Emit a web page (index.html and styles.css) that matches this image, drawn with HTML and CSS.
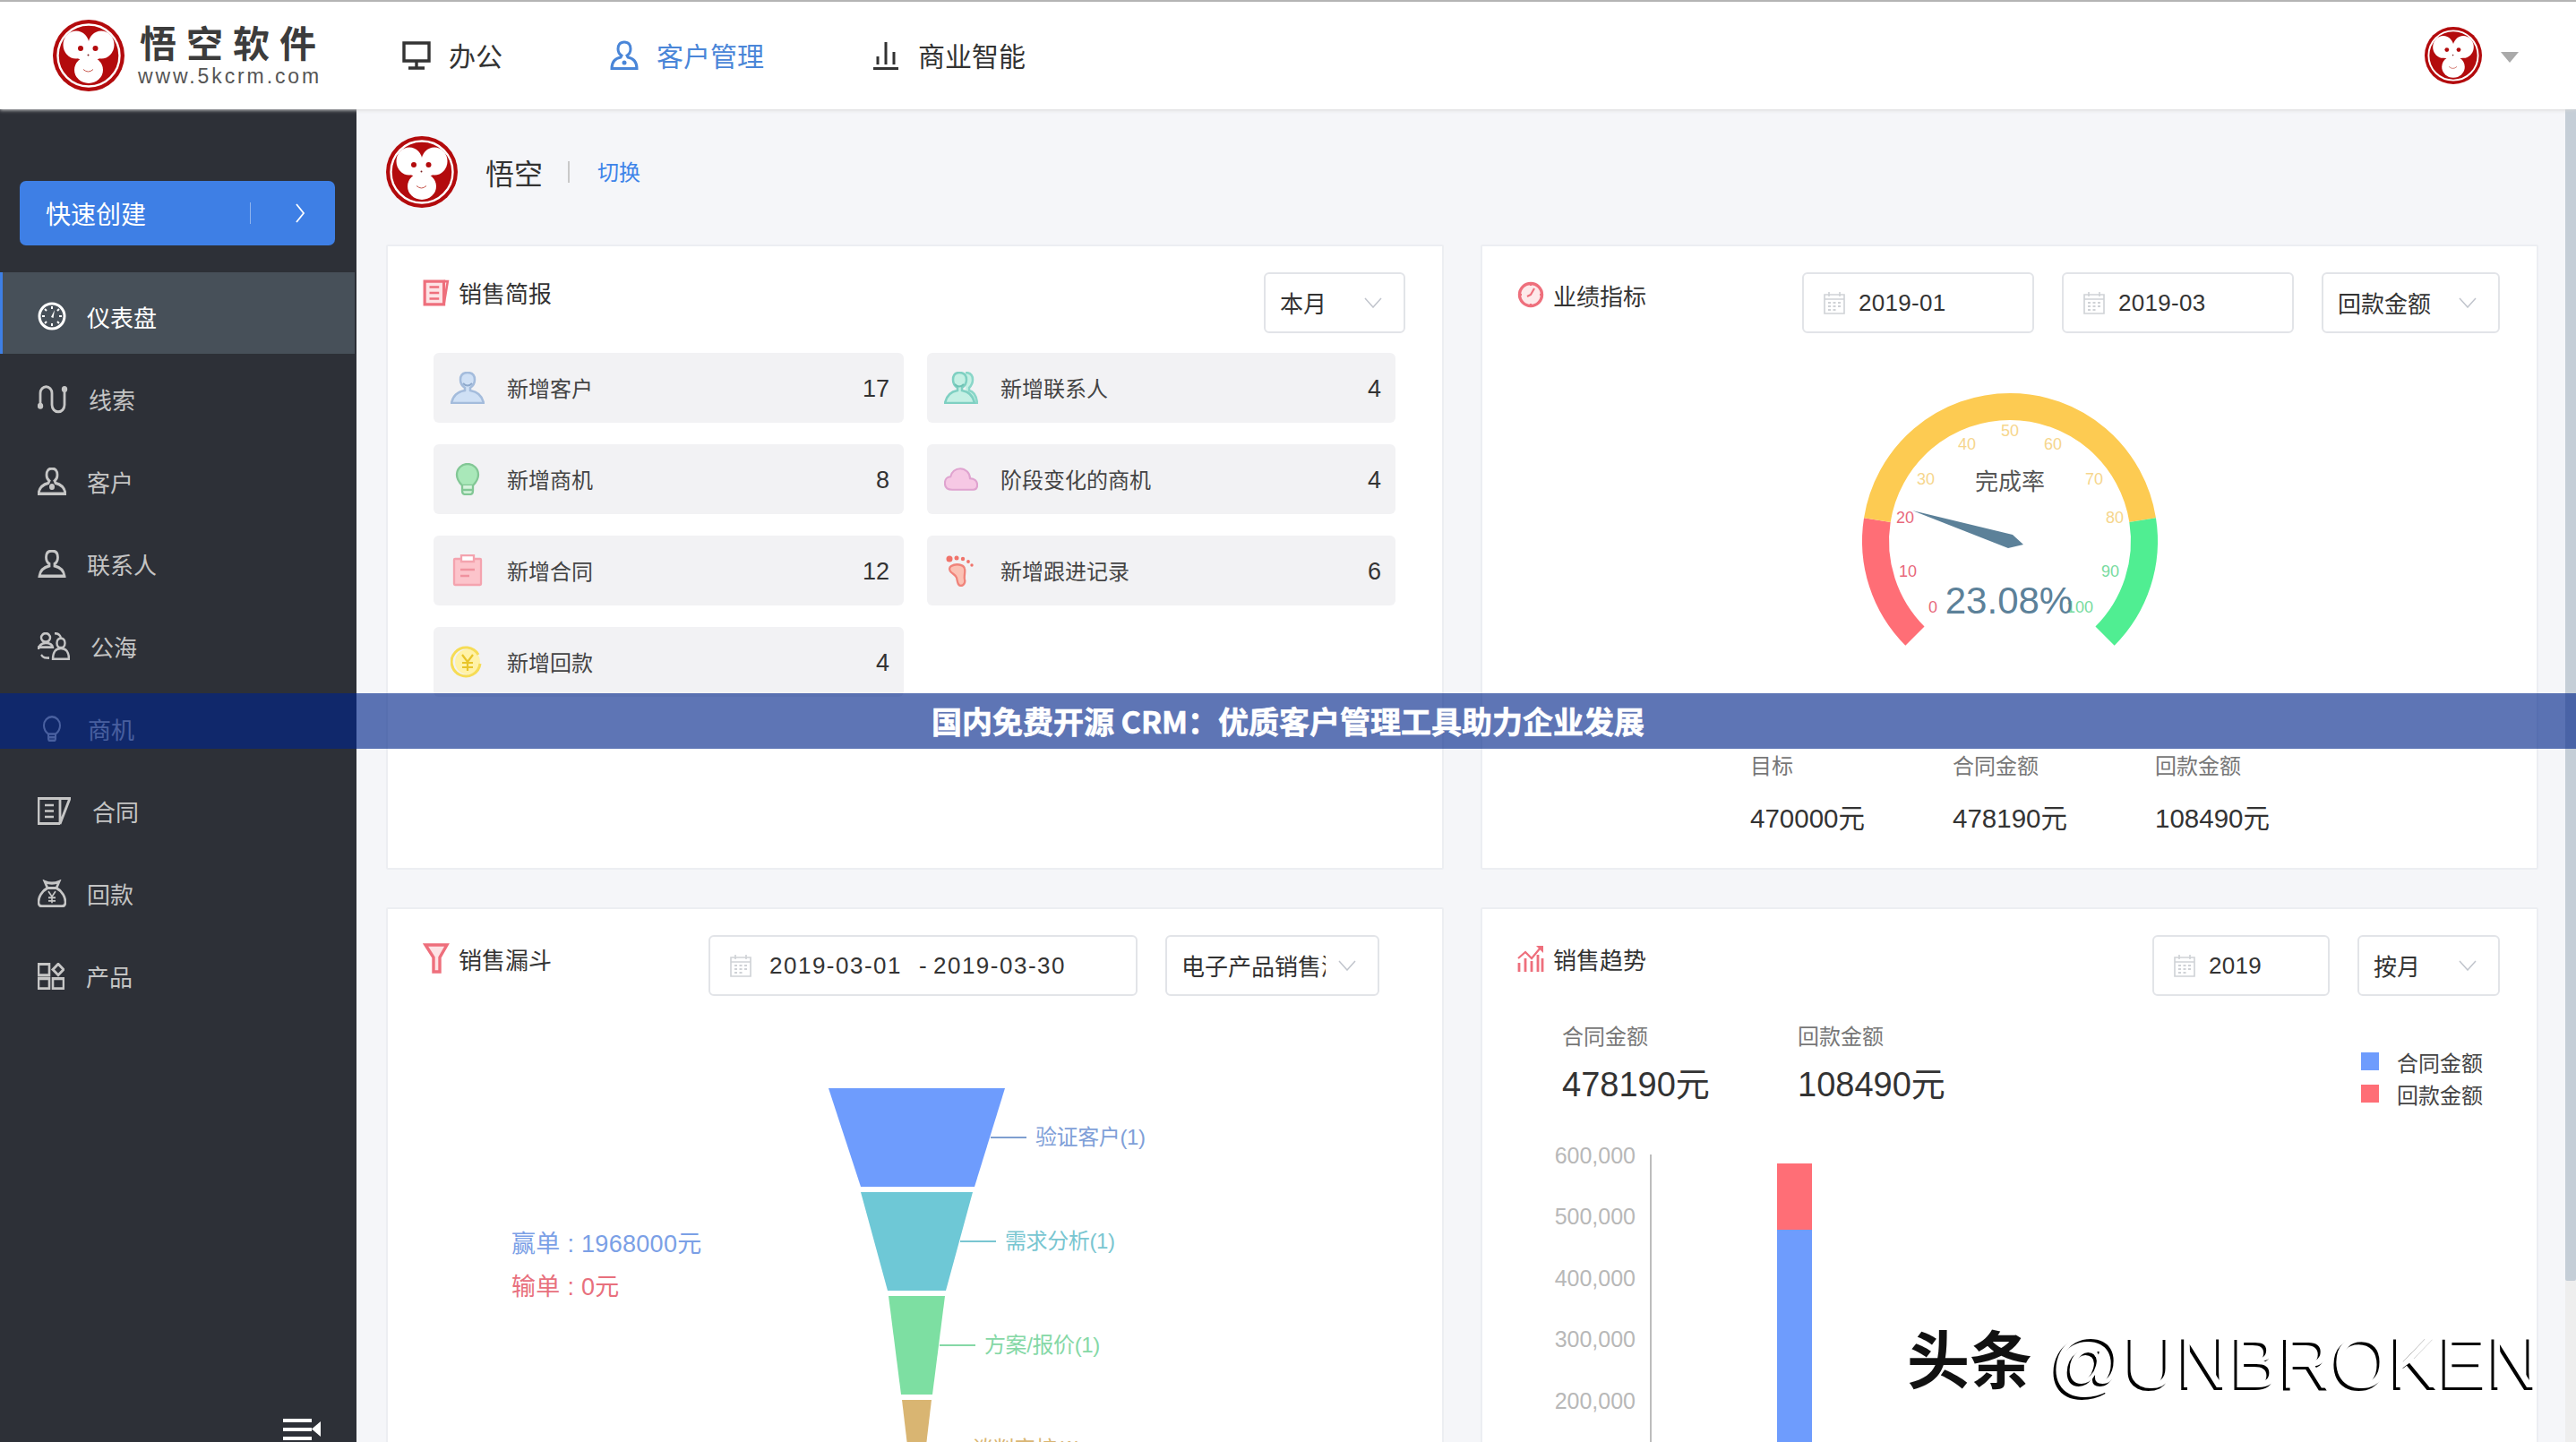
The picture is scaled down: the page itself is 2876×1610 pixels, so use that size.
FILE: index.html
```html
<!DOCTYPE html>
<html lang="zh-CN">
<head>
<meta charset="utf-8">
<title>悟空CRM</title>
<link rel="stylesheet" href="styles.css">
</head>
<body>
<svg class="defs" aria-hidden="true">
  <symbol id="monkey" viewBox="0 0 80 80">
    <circle cx="40" cy="40" r="40" fill="#b30b0d"/>
    <circle cx="40" cy="40" r="34.5" fill="none" stroke="#fff" stroke-width="2.4"/>
    <ellipse cx="26" cy="28" rx="14.5" ry="15.5" fill="#fff"/>
    <ellipse cx="54" cy="28" rx="14.5" ry="15.5" fill="#fff"/>
    <ellipse cx="40" cy="35" rx="18" ry="11" fill="#fff"/>
    <ellipse cx="40" cy="56" rx="16" ry="15" fill="#fff"/>
    <circle cx="31" cy="32" r="3" fill="#b30b0d"/>
    <circle cx="47.5" cy="32" r="3" fill="#b30b0d"/>
    <circle cx="39.5" cy="39.5" r="1" fill="#7a2020"/>
    <path d="M34 55.5q5.500 5 11 0" fill="none" stroke="#c85a50" stroke-width="1"/>
  </symbol>
  <symbol id="cal" viewBox="0 0 24 26">
    <path d="M1 4h22v21H1zM1 9h22M6 1v5M18 1v5" fill="none" stroke="#cfd2d6" stroke-width="1.600"/>
    <path d="M5 13h3M10.500 13h3M16 13h3M5 17h3M10.500 17h3M16 17h3M5 21h3M10.500 21h3" stroke="#cfd2d6" stroke-width="1.800"/>
  </symbol>
  <symbol id="chev" viewBox="0 0 20 12">
    <path d="M1 1l9 10 9-10" fill="none" stroke="#c0c4cc" stroke-width="1.500"/>
  </symbol>
</svg>

<div class="app">
  <header class="topbar">
    <div class="brand">
      <svg class="brand-mark"><use href="#monkey"/></svg>
      <div class="brand-text">
        <div class="brand-name">悟空软件</div>
        <div class="brand-url">www.5kcrm.com</div>
      </div>
    </div>
    <nav class="nav">
      <a class="nav-item">
        <svg class="nav-icon" viewBox="0 0 34 34"><path d="M3 3h28v20H3zM17 23v7M8 31h18" fill="none" stroke="#333" stroke-width="3.400"/></svg>
        <span class="nav-text">办公</span>
      </a>
      <a class="nav-item is-active">
        <svg class="nav-icon" viewBox="0 0 34 34"><path d="M17 2c5 0 7 3.500 7 7.500 0 3-1.500 6-4 7.500l1 2c5 1 10 4 10 12.500H3C3 23 8 20 13 19l1-2c-2.500-1.500-4-4.500-4-7.500C10 5.500 12 2 17 2z" fill="none" stroke="#4a86d8" stroke-width="3"/><circle cx="17" cy="25" r="2.500" fill="#4a86d8"/></svg>
        <span class="nav-text">客户管理</span>
      </a>
      <a class="nav-item">
        <svg class="nav-icon" viewBox="0 0 34 34"><path d="M3 31.500h28" stroke="#333" stroke-width="3"/><path d="M8 27v-9M17 27V2M26 27V13" stroke="#333" stroke-width="3"/></svg>
        <span class="nav-text">商业智能</span>
      </a>
    </nav>
    <div class="account">
      <svg class="account-mark"><use href="#monkey"/></svg>
      <span class="caret"></span>
    </div>
  </header>

  <div class="body">
    <aside class="sidebar">
      <button class="quick">
        <span class="quick-label">快速创建</span>
        <span class="quick-rule"></span>
        <svg class="quick-arrow" viewBox="0 0 12 24"><path d="M2 2l8 10-8 10" fill="none" stroke="#fff" stroke-width="1.800"/></svg>
      </button>
      <ul class="menu">
        <li class="menu-item is-current">
          <svg class="mi" width="32" height="32" viewBox="0 0 32 32"><circle cx="16" cy="16" r="14" fill="none" stroke="#fff" stroke-width="3"/><path d="M16 5v3M16 24v3M5 16h3M24 16h3M8 8l2 2M24 8l-2 2M8 24l2-2M24 24l-2-2" stroke="#fff" stroke-width="2"/><path d="M19 9l-4 8 2.500 1z" fill="#fff"/></svg>
          <span>仪表盘</span>
        </li>
        <li class="menu-item">
          <svg class="mi" width="34" height="33" viewBox="0 0 34 30" preserveAspectRatio="none"><path d="M3 21V9a6.500 6.500 0 0 1 13 0v12a7 7 0 0 0 14 0V5" fill="none" stroke="#c6c6c6" stroke-width="2.800"/><circle cx="3" cy="22" r="3.200" fill="#c6c6c6"/><circle cx="30" cy="5" r="3.200" fill="#c6c6c6"/></svg>
          <span>线索</span>
        </li>
        <li class="menu-item">
          <svg class="mi" width="32" height="31" viewBox="0 0 32 26" preserveAspectRatio="none"><path d="M16 1c4 0 6 2.500 6 6 0 2.500-1.500 4.500-3 5.500l1 2c5 1 10 3 11 10H1c1-7 6-9 11-10l1-2c-1.500-1-3-3-3-5.500 0-3.500 2-6 6-6z" fill="none" stroke="#c6c6c6" stroke-width="2.800"/><circle cx="16" cy="18" r="3" fill="#c6c6c6"/></svg>
          <span>客户</span>
        </li>
        <li class="menu-item">
          <svg class="mi" width="32" height="31" viewBox="0 0 32 26" preserveAspectRatio="none"><path d="M16 1c4.500 0 6.500 2.500 6.500 6 0 2.500-1.500 5-3.500 6v2c5 1 10 3 11 9.500H2c1-6.500 6-8.500 11-9.500v-2c-2-1-3.500-3.500-3.500-6 0-3.500 2-6 6.500-6z" fill="none" stroke="#c6c6c6" stroke-width="2.800"/></svg>
          <span>联系人</span>
        </li>
        <li class="menu-item">
          <svg class="mi" width="36" height="31" viewBox="0 0 36 26" preserveAspectRatio="none"><ellipse cx="9" cy="5" rx="5" ry="4" fill="none" stroke="#c6c6c6" stroke-width="2.400"/><path d="M1 16c0-3 3-6 8-6s8 2 8 4H1z" fill="none" stroke="#c6c6c6" stroke-width="2.400"/><circle cx="26" cy="10" r="4.500" fill="none" stroke="#c6c6c6" stroke-width="2.400"/><path d="M17 25c0-6 3-10 9-10s9 4 9 10z" fill="none" stroke="#c6c6c6" stroke-width="2.400"/><path d="M19 1c3 0 6 1 7 4M4 21c2 3 5 3 9 3" fill="none" stroke="#c6c6c6" stroke-width="2.200"/></svg>
          <span>公海</span>
        </li>
        <li class="menu-item">
          <svg class="mi mi-bulb" width="20" height="29" viewBox="0 0 20 24" preserveAspectRatio="none"><path d="M6 17C3 15 1 12 1 9a9 8 0 0 1 18 0c0 3-2 6-5 8zM6 17v4q0 2 2 2h4q2 0 2-2v-4M6 20h8" fill="none" stroke="#c6c6c6" stroke-width="2"/></svg>
          <span>商机</span>
        </li>
        <li class="menu-item">
          <svg class="mi" width="37" height="31" viewBox="0 0 37 24" preserveAspectRatio="none"><path d="M25 23H1V1h24" fill="none" stroke="#c6c6c6" stroke-width="2.800"/><path d="M8 7h10M8 12h10M8 17h10" stroke="#c6c6c6" stroke-width="2"/><path d="M25 1h11l-11 22z" fill="none" stroke="#c6c6c6" stroke-width="2.800"/></svg>
          <span class="t-gap">合同</span>
        </li>
        <li class="menu-item">
          <svg class="mi" width="32" height="31" viewBox="0 0 32 26" preserveAspectRatio="none"><path d="M11 8L8 2q8 3 16 0l-3 6c7 3 10 9 10 13q0 4-4 4H5q-4 0-4-4c0-4 3-10 10-13zM11 8h10" fill="none" stroke="#c6c6c6" stroke-width="2.600"/><path d="M12 11l4 5 4-5M16 16v6M12 17h8M12 20h8" fill="none" stroke="#c6c6c6" stroke-width="1.600"/></svg>
          <span>回款</span>
        </li>
        <li class="menu-item">
          <svg class="mi mi-wide" width="30" height="30" viewBox="0 0 30 24" preserveAspectRatio="none"><path d="M1 1h12v10H1zM1 14h12v9H1zM17 14h12v9H17z" fill="none" stroke="#c6c6c6" stroke-width="2.600"/><path d="M23 1l6 5-6 5-6-5z" fill="none" stroke="#c6c6c6" stroke-width="2.600"/></svg>
          <span>产品</span>
        </li>
      </ul>
      <svg class="collapse" viewBox="0 0 42 26"><path d="M0 2h32M0 12h32M0 22h32" stroke="#fff" stroke-width="4"/><path d="M42 3v17l-10-8.500z" fill="#fff"/></svg>
    </aside>

    <main class="main">
      <div class="user-row">
        <svg class="user-mark"><use href="#monkey"/></svg>
        <span class="user-name">悟空</span>
        <span class="user-rule"></span>
        <a class="user-switch">切换</a>
      </div>

      <div class="cards">
        <section class="card card-tall">
          <div class="card-head">
            <div class="card-title title-high">
              <svg class="title-icon" viewBox="0 0 28 28"><path d="M2 2h20v24H2z" fill="#fde3e5" stroke="#ee6f7c" stroke-width="3"/><path d="M22 2h4l-4 24" fill="none" stroke="#ee6f7c" stroke-width="2.400"/><path d="M7 8h10M7 14h10M7 20h10" stroke="#ee6f7c" stroke-width="2.400"/></svg>
              <span>销售简报</span>
            </div>
            <div class="ctl w158"><span class="ctl-text">本月</span><svg class="ctl-chev"><use href="#chev"/></svg></div>
          </div>
          <div class="brief">
            <div class="brief-row">
              <svg class="brief-icon" viewBox="0 0 38 36"><path d="M19 1c6 0 8 3 8 8 0 4-2 7-5 9v3c6 1 13 4 15 14H1c2-10 9-13 15-14v-3c-3-2-5-5-5-9 0-5 2-8 8-8z" fill="#cfe0f5" stroke="#a4bcdc" stroke-width="2.500"/><path d="M14 13q5 5 10 0" fill="none" stroke="#8fa9cc" stroke-width="2"/></svg>
              <span class="brief-label">新增客户</span><span class="brief-num">17</span>
            </div>
            <div class="brief-row">
              <svg class="brief-icon" viewBox="0 0 38 36"><path d="M24 1c6 0 8 3 8 8 0 4-2 7-4 9v3c4 1 8 4 9 14H24" fill="#c5f0e4" stroke="#8ad6c8" stroke-width="2.500"/><path d="M17 1c6 0 8 3 8 8 0 4-2 7-5 9v3c6 1 12 4 14 14H1c2-10 8-13 14-14v-3c-3-2-5-5-5-9 0-5 2-8 7-8z" fill="#c5f0e4" stroke="#7fd0c2" stroke-width="2.500"/><path d="M12 14q5 5 10 0" fill="none" stroke="#6fc2b4" stroke-width="2"/></svg>
              <span class="brief-label">新增联系人</span><span class="brief-num">4</span>
            </div>
            <div class="brief-row">
              <svg class="brief-icon" viewBox="0 0 38 36"><path d="M13 25c-3-3-6-7-6-12a12 12 0 0 1 24 0c0 5-3 9-6 12z" fill="#a9e8b9" stroke="#82c795" stroke-width="2.300"/><path d="M13 25v6q0 4 4 4h4q4 0 4-4v-6M13 30h12" fill="#d5f3dc" stroke="#82c795" stroke-width="2.300"/></svg>
              <span class="brief-label">新增商机</span><span class="brief-num">8</span>
            </div>
            <div class="brief-row">
              <svg class="brief-icon" viewBox="0 0 42 30"><path d="M10 28C4 28 1 25 1 20s3-8 7-8c1-6 6-10 12-10s12 5 12 12c6 0 9 4 9 8 0 4-2 6-5 6z" fill="#f6c8e4" stroke="#dfa3cf" stroke-width="2.300"/></svg>
              <span class="brief-label">阶段变化的商机</span><span class="brief-num">4</span>
            </div>
            <div class="brief-row">
              <svg class="brief-icon" viewBox="0 0 38 36"><path d="M5 5h28q1 0 1 1v27q0 1-1 1H5q-1 0-1-1V6q0-1 1-1z" fill="#fcc4cb" stroke="#f4a3ae" stroke-width="2.300"/><path d="M12 1h14v7H12z" fill="#fff" stroke="#f4a3ae" stroke-width="2.300"/><path d="M11 17h16M11 24h10" stroke="#f0929f" stroke-width="2.300"/></svg>
              <span class="brief-label">新增合同</span><span class="brief-num">12</span>
            </div>
            <div class="brief-row">
              <svg class="brief-icon" viewBox="0 0 38 36"><path d="M8 13c5-3 14-2 15 3 1 4-1 8 0 12 1 3-1 7-4 7-4 0-4-5-5-9-1-3-4-4-6-6-2-2-3-5 0-7z" fill="#fbc1b4" stroke="#f0837a" stroke-width="2.300"/><circle cx="6" cy="5" r="3.500" fill="#f0736a"/><circle cx="14" cy="4" r="2.500" fill="#f0736a"/><circle cx="21" cy="5" r="2.200" fill="#f0736a"/><circle cx="27" cy="8" r="1.900" fill="#f0736a"/><circle cx="31" cy="12" r="1.700" fill="#f0736a"/></svg>
              <span class="brief-label">新增跟进记录</span><span class="brief-num">6</span>
            </div>
            <div class="brief-row">
              <svg class="brief-icon" viewBox="0 0 38 36"><circle cx="19" cy="18" r="14" fill="#fff2a8"/><path d="M33 20a16 16 0 1 1-2-10" fill="none" stroke="#f6dc55" stroke-width="3"/><path d="M13 10l6 8 6-8M19 18v10M13 19h12M13 24h12" fill="none" stroke="#e8c42a" stroke-width="2.200"/></svg>
              <span class="brief-label">新增回款</span><span class="brief-num">4</span>
            </div>
          </div>
        </section>

        <section class="card card-tall">
          <div class="card-head">
            <div class="card-title title-mid">
              <svg class="title-icon" viewBox="0 0 30 30"><circle cx="15" cy="15" r="12.500" fill="#fde9ea" stroke="#ee6f7c" stroke-width="3.400"/><path d="M15 1v4M15 25v4M1 15h4M25 15h4" stroke="#ee6f7c" stroke-width="2.200"/><path d="M19 8l-4 7-4 2" fill="none" stroke="#ee6f7c" stroke-width="2.200"/></svg>
              <span>业绩指标</span>
            </div>
            <div class="ctl-group">
              <div class="ctl w259"><svg class="ctl-cal"><use href="#cal"/></svg><span class="ctl-date">2019-01</span></div>
              <div class="ctl w259"><svg class="ctl-cal"><use href="#cal"/></svg><span class="ctl-date">2019-03</span></div>
              <div class="ctl w199"><span class="ctl-text">回款金额</span><svg class="ctl-chev"><use href="#chev"/></svg></div>
            </div>
          </div>
          <svg class="gauge" viewBox="1655 372 1177 400">
            <g fill="none" stroke-width="30">
              <path d="M2137.930 710.070A150 150 0 0 1 2095.850 580.540" stroke="#ff6e76"/>
              <path d="M2095.850 580.540A150 150 0 0 1 2392.150 580.540" stroke="#fdcb52"/>
              <path d="M2392.150 580.540A150 150 0 0 1 2350.070 710.070" stroke="#50ee92"/>
            </g>
            <g class="tick tick-red">
              <text x="2158" y="684">0</text><text x="2130" y="644">10</text><text x="2127" y="584">20</text>
            </g>
            <g class="tick tick-yel">
              <text x="2150" y="541">30</text><text x="2196" y="502">40</text><text x="2244" y="487">50</text><text x="2292" y="502">60</text><text x="2338" y="541">70</text><text x="2361" y="584">80</text>
            </g>
            <g class="tick tick-grn">
              <text x="2356" y="644">90</text><text x="2322" y="684">100</text>
            </g>
            <text class="gauge-title" x="2244" y="547">完成率</text>
            <polygon points="2135,570 2247,597 2259,608 2242,612" fill="#5c8199"/>
            <text class="gauge-value" x="2243" y="685">23.08%</text>
          </svg>
          <div class="kpis">
            <div class="kpi"><div class="kpi-label">目标</div><div class="kpi-value">470000元</div></div>
            <div class="kpi"><div class="kpi-label">合同金额</div><div class="kpi-value">478190元</div></div>
            <div class="kpi"><div class="kpi-label">回款金额</div><div class="kpi-value">108490元</div></div>
          </div>
        </section>

        <section class="card">
          <div class="card-head head-inset">
            <div class="card-title">
              <svg class="title-icon title-funnel" viewBox="0 0 30 34"><path d="M3 2h24l-8 14v16h-7V16z" fill="#fde3e5" stroke="#ee6f7c" stroke-width="3.400"/></svg>
              <span>销售漏斗</span>
            </div>
            <div class="ctl-group">
              <div class="ctl w479"><svg class="ctl-cal"><use href="#cal"/></svg><span class="ctl-date ctl-range">2019-03-01</span><span class="ctl-date ctl-sep">-</span><span class="ctl-date ctl-range">2019-03-30</span></div>
              <div class="ctl w239"><span class="ctl-text ctl-clip">电子产品销售漏斗</span><svg class="ctl-chev"><use href="#chev"/></svg></div>
            </div>
          </div>
          <svg class="funnel" viewBox="433 1112 1177 600">
            <polygon points="925,1215 1122,1215 1088,1325 961,1325" fill="#6e9cfd"/>
            <polygon points="961,1331 1086,1331 1056,1441 991,1441" fill="#6ec8d6"/>
            <polygon points="992,1447 1055,1447 1041,1557 1006,1557" fill="#7ddfa2"/>
            <polygon points="1007,1563 1040,1563 1027,1673 1020,1673" fill="#d9b572"/>
            <path d="M1106 1270h40" stroke="#7f9fd0" stroke-width="2"/>
            <path d="M1072 1386h40" stroke="#79c6d1" stroke-width="2"/>
            <path d="M1049 1502h40" stroke="#85d8a6" stroke-width="2"/>
            <text class="fl fl-1" x="1156" y="1278">验证客户(1)</text>
            <text class="fl fl-2" x="1122" y="1394">需求分析(1)</text>
            <text class="fl fl-3" x="1099" y="1510">方案/报价(1)</text>
            <text class="fl fl-4" x="1085" y="1626">谈判审核(1)</text>
            <text class="fs fs-win" x="571" y="1398">赢单 : 1968000元</text>
            <text class="fs fs-lose" x="571" y="1446">输单 : 0元</text>
          </svg>
        </section>

        <section class="card">
          <div class="card-head">
            <div class="card-title">
              <svg class="title-icon" viewBox="0 0 30 30"><path d="M2 30V20M9 30V15M16 30V18M23 30V11M28 30V15" stroke="#ee6f7c" stroke-width="2.800"/><path d="M1 15L9 8l7 7L26 3" fill="none" stroke="#ee6f7c" stroke-width="2.200"/><path d="M21 1h8v8z" fill="#ee6f7c"/></svg>
              <span>销售趋势</span>
            </div>
            <div class="ctl-group">
              <div class="ctl w198"><svg class="ctl-cal"><use href="#cal"/></svg><span class="ctl-date">2019</span></div>
              <div class="ctl w159"><span class="ctl-text">按月</span><svg class="ctl-chev"><use href="#chev"/></svg></div>
            </div>
          </div>
          <div class="trend-top">
            <div class="trend-kpi"><div class="kpi-label">合同金额</div><div class="trend-value">478190元</div></div>
            <div class="trend-kpi"><div class="kpi-label">回款金额</div><div class="trend-value">108490元</div></div>
            <ul class="legend">
              <li class="legend-item"><span class="swatch sw-blue"></span>合同金额</li>
              <li class="legend-item"><span class="swatch sw-red"></span>回款金额</li>
            </ul>
          </div>
          <svg class="bars" viewBox="1655 1239 1177 400">
            <g class="axis-label">
              <text x="1826" y="1299">600,000</text>
              <text x="1826" y="1367">500,000</text>
              <text x="1826" y="1436">400,000</text>
              <text x="1826" y="1504">300,000</text>
              <text x="1826" y="1573">200,000</text>
            </g>
            <path d="M1843 1289V1640" stroke="#bdbdbd" stroke-width="2"/>
            <rect x="1984" y="1299" width="39" height="74" fill="#ff6e76"/>
            <rect x="1984" y="1373" width="39" height="270" fill="#6e9cfd"/>
          </svg>
        </section>
      </div>
    </main>

    <div class="scrollbar"><div class="scrollbar-thumb"></div></div>
  </div>

  <div class="banner"><span class="banner-text">国内免费开源 CRM：优质客户管理工具助力企业发展</span></div>
  <div class="watermark"><span class="wm-cjk">头条</span>@UNBROKEN</div>
</div>
</body>
</html>
```

FILE: styles.css
```css
* { box-sizing: border-box; }
html, body { margin: 0; height: 100%; overflow: hidden; }
body {
  font-family: "Liberation Sans", "Noto Sans CJK SC", sans-serif;
  color: #333;
  background: #f5f6f9;
}
.defs { position: absolute; width: 0; height: 0; }
.app { position: relative; height: 1610px; display: flex; flex-direction: column; overflow: hidden; }

/* top bar */
.topbar {
  position: relative;
  z-index: 2;
  flex: none;
  height: 122px;
  display: flex;
  align-items: center;
  background: #fff;
  border-top: 2px solid #b4b4b4;
  padding: 0 64px 0 58px;
  box-shadow: 0 1px 4px rgba(215, 215, 215, .95);
}
.brand { display: flex; align-items: center; gap: 14px; }
.brand-mark { width: 82px; height: 80px; }
.brand-text { display: flex; flex-direction: column; width: 206px; padding-top: 2px; }
.brand-name { font-size: 41px; line-height: 44px; font-weight: 700; letter-spacing: 11px; color: #3c3c3c; margin-left: 2px; white-space: nowrap; }
.brand-url { font-size: 23px; line-height: 26px; letter-spacing: 2.9px; color: #555; white-space: nowrap; }
.nav { display: flex; margin-left: 88px; gap: 119px; }
.nav-item { display: flex; align-items: center; gap: 19px; font-size: 30px; color: #333; }
.nav-text { padding-bottom: 2px; }
.nav-item.is-active { color: #4a86d8; }
.nav-icon { width: 34px; height: 34px; }
.account { margin-left: auto; display: flex; align-items: center; gap: 21px; }
.account-mark { width: 64px; height: 64px; }
.caret { width: 0; height: 0; margin-top: 3px; border-left: 10px solid transparent; border-right: 10px solid transparent; border-top: 12px solid #aaa; }

/* frame */
.body { flex: 1; min-height: 0; display: flex; }

/* sidebar */
.sidebar { flex: none; width: 398px; background: #2d3037; display: flex; flex-direction: column; padding-top: 80px; overflow: hidden; }
.quick {
  flex: none;
  width: 352px;
  height: 72px;
  margin-left: 22px;
  display: flex;
  align-items: center;
  padding: 0 33px 0 29px;
  background: #3e7fe5;
  border: 0;
  border-radius: 7px;
  color: #fff;
  font: inherit;
  font-size: 28px;
}
.quick-label { flex: 1; text-align: left; }
.quick-rule { width: 1px; height: 24px; background: #8fb4ee; margin-right: 49px; }
.quick-arrow { width: 12px; height: 24px; }
.menu { list-style: none; margin: 30px 0 0; padding: 0; }
.menu-item { height: 92px; display: flex; align-items: center; padding: 7px 0 0 42px; gap: 23px; font-size: 26px; color: #c4c4c4; }
.menu-item.is-current { height: 91px; margin: 0 2px 1px 0; background: #475059; border-left: 3px solid #3e7fe5; padding-left: 39px; color: #fff; }
.mi { flex: none; }
.mi-bulb { margin-left: 6px; margin-right: 7px; }
.mi-wide { margin-right: 1px; }
.t-gap { margin-left: 1px; }
.collapse { width: 42px; height: 26px; margin: auto 40px 0 auto; flex: none; }

/* main */
.main { flex: 1; min-width: 0; padding: 30px 32px 0 33px; overflow: hidden; }
.user-row { display: flex; align-items: center; height: 80px; margin-bottom: 41px; }
.user-mark { width: 80px; height: 80px; }
.user-name { font-size: 32px; margin-left: 31px; }
.user-rule { width: 2px; height: 24px; background: #c9c9c9; margin: 0 31px 0 28px; }
.user-switch { font-size: 24px; color: #3e84e9; padding-bottom: 3px; }
.cards { display: grid; grid-template-columns: 1181px 1181px; gap: 42px 41px; }
.card { background: #fff; border: 2px solid #eceef2; border-radius: 2px; }
.card-tall { height: 698px; overflow: hidden; }
.card-head { display: flex; align-items: flex-start; justify-content: space-between; padding: 29px 41px 0 39px; }
.head-inset { padding-right: 70px; }
.card-title { display: flex; align-items: center; height: 52px; gap: 10px; font-size: 26px; color: #333; }
.title-high { height: 45px; }
.title-mid { height: 50px; }
.title-icon { width: 30px; height: 30px; flex: none; }
.title-funnel { height: 34px; }

/* controls */
.ctl-group { display: flex; gap: 31px; }
.ctl { height: 68px; display: flex; align-items: center; border: 2px solid #e2e4e8; border-radius: 6px; padding: 0 24px 0 16px; font-size: 26px; color: #333; }
.w158 { width: 158px; }
.w159 { width: 159px; }
.w198 { width: 198px; }
.w199 { width: 199px; }
.w239 { width: 239px; }
.w259 { width: 259px; }
.w479 { width: 479px; }
.ctl-text { flex: 1; min-width: 0; white-space: nowrap; padding-bottom: 2px; }
.ctl-clip { overflow: hidden; margin-right: 14px; }
.ctl-chev { width: 20px; height: 12px; flex: none; }
.ctl-cal { width: 24px; height: 26px; flex: none; margin: 0 15px 0 6px; }
.w479 .ctl-cal { margin-right: 20px; }
.ctl-date { white-space: pre; letter-spacing: .3px; }
.ctl-range { letter-spacing: 1.5px; }
.ctl-sep { margin: 0 7px 0 19px; }

/* brief */
.brief { display: grid; grid-template-columns: 525px 523px; gap: 24px 26px; padding: 22px 0 0 51px; }
.brief-row { height: 78px; display: flex; align-items: center; padding: 0 16px 0 19px; background: #f2f2f4; border-radius: 6px; font-size: 24px; color: #444; }
.brief-icon { width: 38px; height: 36px; flex: none; margin-right: 25px; }
.brief-label { flex: 1; padding-bottom: 2px; }
.brief-num { font-size: 27px; color: #333; padding-top: 2px; }

/* gauge */
.gauge { display: block; width: 1177px; height: 400px; }
.tick text { font-size: 18px; text-anchor: middle; }
.tick-red { fill: #e8687b; }
.tick-yel { fill: #f6d68d; }
.tick-grn { fill: #78dba0; }
.gauge-title { font-size: 26px; text-anchor: middle; fill: #555; }
.gauge-value { font-size: 42px; text-anchor: middle; fill: #5c8199; }
.kpis { display: flex; padding: 67px 0 0 299px; }
.kpi { width: 226px; }
.kpi-label { font-size: 24px; line-height: 34px; color: #777; }
.kpi-value { font-size: 29.5px; line-height: 40px; margin-top: 21px; color: #333; }

/* funnel */
.funnel { display: block; width: 1177px; height: 600px; }
.fl { font-size: 24px; letter-spacing: -.4px; }
.fl-1 { fill: #7fa0d8; }
.fl-2 { fill: #79c6d1; }
.fl-3 { fill: #85d8a6; }
.fl-4 { fill: #d9b572; }
.fs { font-size: 27px; letter-spacing: .3px; }
.fs-win { fill: #7ba0e6; }
.fs-lose { fill: #e8707d; }

/* trend */
.trend-top { display: flex; height: 127px; padding: 29px 60px 0 89px; }
.trend-kpi { width: 263px; }
.trend-value { font-size: 38px; line-height: 56px; margin-top: 8px; color: #333; }
.legend { list-style: none; margin: 26px 0 0 auto; padding: 0; }
.legend-item { display: flex; align-items: center; height: 36px; gap: 20px; font-size: 24px; color: #444; }
.swatch { width: 20px; height: 20px; }
.sw-blue { background: #6e9cfd; }
.sw-red { background: #ff6e76; }
.bars { display: block; width: 1177px; height: 400px; }
.axis-label text { font-size: 25px; text-anchor: end; fill: #b8b8b8; }

/* scrollbar */
.scrollbar { flex: none; width: 12px; background: #eeeeee; }
.scrollbar-thumb { height: 1308px; background: #c5ced7; border-radius: 0 0 2px 2px; }

/* overlays */
.banner {
  position: absolute;
  z-index: 3;
  left: 0;
  right: 0;
  top: 774px;
  height: 62px;
  display: flex;
  align-items: center;
  justify-content: center;
  background: rgba(0, 36, 138, .63);
  color: #fff;
  font-size: 34px;
  font-weight: 700;
  font-family: "Noto Sans CJK SC", sans-serif;
}
.banner-text { padding-bottom: 2px; -webkit-text-stroke: .6px #fff; }
.watermark {
  position: absolute;
  z-index: 4;
  left: 2129px;
  top: 1473px;
  display: flex;
  align-items: center;
  font-size: 82px;
  line-height: 96px;
  white-space: nowrap;
  color: #fff;
  text-shadow: -3px 3px 0 #000;
}
.wm-cjk { font-size: 70px; font-weight: 700; margin-right: 20px; color: #111; text-shadow: 2px -2px 0 #fff; }
```
